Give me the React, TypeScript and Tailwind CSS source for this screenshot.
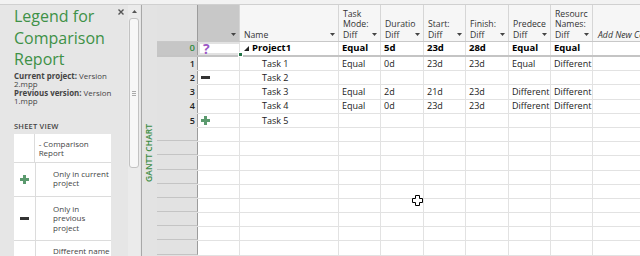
import React from 'react';

// Column definitions for the comparison grid
const COLS = [
    { key: 'ind', w: 'w-[42px]', head: [] as string[] },
    { key: 'name', w: 'w-[99px]', head: ['Name'] },
    { key: 'mode', w: 'w-[42px]', head: ['Task', 'Mode:', 'Diff'] },
    { key: 'dur', w: 'w-[43px]', head: ['Duratio', 'Diff'] },
    { key: 'start', w: 'w-[42px]', head: ['Start:', 'Diff'] },
    { key: 'finish', w: 'w-[43px]', head: ['Finish:', 'Diff'] },
    { key: 'pred', w: 'w-[42px]', head: ['Predece', 'Diff'] },
    { key: 'res', w: 'w-[42px]', head: ['Resourc', 'Names:', 'Diff'] },
];

type Row = { id: number; ind?: 'q' | 'minus' | 'plus'; name?: string; vals?: string[] };

const ROWS: Row[] = [
    { id: 0, ind: 'q', name: 'Project1', vals: ['Equal', '5d', '23d', '28d', 'Equal', 'Equal'] },
    { id: 1, name: 'Task 1', vals: ['Equal', '0d', '23d', '23d', 'Equal', 'Different'] },
    { id: 2, ind: 'minus', name: 'Task 2' },
    { id: 3, name: 'Task 3', vals: ['Equal', '2d', '21d', '23d', 'Different', 'Different'] },
    { id: 4, name: 'Task 4', vals: ['Equal', '0d', '23d', '23d', 'Different', 'Different'] },
    { id: 5, ind: 'plus', name: 'Task 5' },
];

const EMPTY_ROWS = Array.from({ length: 10 }, (_, i) => i);

function Arrow() {
    return (
        <svg width="5" height="3" viewBox="0 0 5 3" className="absolute right-[3px] bottom-[5px]">
            <path d="M0 0h5L2.5 3z" fill="#444" />
        </svg>
    );
}

function PlusIcon() {
    return (
        <svg width="9" height="9" viewBox="0 0 9 9">
            <path d="M3 0h3v3h3v3H6v3H3V6H0V3h3z" fill="#5b9a6e" />
        </svg>
    );
}

function MinusIcon() {
    return <div className="w-[9px] h-[3px] bg-[#333]" />;
}

function Indicator({ kind }: { kind?: Row['ind'] }) {
    if (kind === 'q') return <span className="text-[14px] leading-none font-bold text-[#9b59c6] pl-[3px]">?</span>;
    if (kind === 'minus') return <div className="pl-[3px]"><MinusIcon /></div>;
    if (kind === 'plus') return <div className="pl-[3px]"><PlusIcon /></div>;
    return null;
}

export default function App() {
    return (
        <div className="w-[640px] h-[256px] overflow-hidden flex flex-col bg-white font-['Open_Sans',sans-serif] text-[#222] relative">
            <div className="h-[5px] shrink-0 bg-[#f2f2f2] border-b border-[#d0d0d0]" />
            <div className="flex flex-1 min-h-0">
                {/* Legend panel */}
                <div className="w-[142px] shrink-0 bg-[#e6e6e6] border-r border-[#a8a8a8] flex">
                    <div className="w-[128px] pl-[14px] flex flex-col">
                        <div className="flex justify-between pt-[1px]">
                            <h1 className="text-[16px] leading-[21.5px] text-[#3e9147] w-[100px]">Legend for Comparison Report</h1>
                            <svg width="6" height="6" viewBox="0 0 6 6" className="mt-[3px] mr-[4px] shrink-0">
                                <path d="M0.5 0.5l5 5M5.5 0.5l-5 5" stroke="#555" strokeWidth="1.4" />
                            </svg>
                        </div>
                        <div className="mt-[1px] text-[7.9px] leading-[8.6px] text-[#444] whitespace-nowrap">
                            <p><span className="font-bold">Current project:</span> Version</p>
                            <p>2.mpp</p>
                            <p><span className="font-bold">Previous version:</span> Version</p>
                            <p>1.mpp</p>
                        </div>
                        <p className="mt-[15px] text-[7.5px] leading-[10px] font-semibold text-[#444] tracking-[0.2px]">SHEET VIEW</p>
                        <div className="mt-[3px] w-[97px] bg-white text-[8px] leading-[9.5px] text-[#444]">
                            <div className="flex h-[29px] border-b border-[#dcdcdc]">
                                <div className="w-[22px] border-r border-[#dcdcdc]" />
                                <div className="pl-[4px] pt-[5px]">- Comparison Report</div>
                            </div>
                            <div className="flex h-[34px] border-b border-[#dcdcdc]">
                                <div className="w-[22px] border-r border-[#dcdcdc] flex items-center justify-center"><PlusIcon /></div>
                                <div className="pl-[17px] pt-[6px] w-[75px]">Only in current project</div>
                            </div>
                            <div className="flex h-[44px] border-b border-[#dcdcdc]">
                                <div className="w-[22px] border-r border-[#dcdcdc] flex items-center justify-center"><MinusIcon /></div>
                                <div className="pl-[17px] pt-[7px] w-[60px]">Only in previous project</div>
                            </div>
                            <div className="flex h-[20px]">
                                <div className="w-[22px] border-r border-[#dcdcdc]" />
                                <div className="pl-[17px] pt-[5px] whitespace-nowrap">Different name</div>
                            </div>
                        </div>
                    </div>
                    {/* scrollbar */}
                    <div className="w-[12px] flex flex-col items-center bg-[#ebebeb]">
                        <svg width="5" height="3" viewBox="0 0 5 3" className="mt-[5px]">
                            <path d="M0 3h5L2.5 0z" fill="#555" />
                        </svg>
                        <div className="mt-[5px] w-[10px] h-[150px] rounded-[3px] bg-[#f7f7f7] border border-[#c2c2c2] flex items-center justify-center">
                            <div className="flex flex-col gap-[1px]">
                                <div className="w-[4px] h-[1px] bg-[#aaa]" />
                                <div className="w-[4px] h-[1px] bg-[#aaa]" />
                                <div className="w-[4px] h-[1px] bg-[#aaa]" />
                            </div>
                        </div>
                    </div>
                </div>

                {/* Gantt chart label strip */}
                <div className="w-[15px] shrink-0 bg-[#e3e3e3] flex flex-col items-center pt-[119px]">
                    <span className="[writing-mode:vertical-rl] rotate-180 text-[8.5px] font-semibold text-[#3a8c43] whitespace-nowrap leading-none">GANTT CHART</span>
                </div>

                {/* Grid */}
                <div className="flex-1 min-w-0 flex flex-col">
                    {/* header */}
                    <div className="flex h-[37px] shrink-0 border-b border-[#c8c8c8] bg-[#f6f6f6] text-[8.7px] leading-[10.5px] text-[#333]">
                        <div className="w-[41px] shrink-0 bg-[#e2e2e2] border-r border-[#9c9c9c]" />
                        {COLS.map(c => (
                            <div key={c.key} className={`${c.w} shrink-0 relative border-r border-[#d6d6d6] flex items-end pl-[4px] pb-[1px] overflow-hidden ${c.key === 'ind' ? 'bg-[#c8c8c8]' : ''}`}>
                                <div className="whitespace-nowrap">
                                    {c.head.map(h => <div key={h}>{h}</div>)}
                                </div>
                                <Arrow />
                            </div>
                        ))}
                        <div className="flex-1 flex items-end pl-[5px] pb-[1px] italic whitespace-nowrap overflow-hidden">Add New Column</div>
                    </div>

                    {/* rows */}
                    {ROWS.map(r => {
                        const bold = r.id === 0;
                        return (
                            <div key={r.id} className={`flex shrink-0 ${bold ? 'h-[15px] border-b-2 border-[#c4c4c4] font-bold text-[9.5px] text-black' : 'h-[14.2px] border-b border-[#e2e2e2] text-[9px]'}`}>
                                <div className={`w-[41px] shrink-0 border-r border-[#9c9c9c] flex items-center justify-end pr-[2px] font-semibold ${bold ? 'bg-[#c6c6c6] text-[#2c8a3a]' : 'bg-[#e2e2e2] text-[#222]'}`}>
                                    {r.id}
                                </div>
                                <div className={`w-[42px] shrink-0 border-r border-[#e2e2e2] flex items-center relative ${bold ? 'border-2 border-[#217346]' : ''}`}>
                                    <Indicator kind={r.ind} />
                                    {bold && <div className="absolute right-[-4px] bottom-[-4px] w-[5px] h-[5px] bg-[#217346] border border-white" />}
                                </div>
                                <div className={`w-[99px] shrink-0 border-r border-[#e2e2e2] flex items-center ${bold ? 'pl-[4px]' : 'pl-[22px]'}`}>
                                    {bold && (
                                        <svg width="5" height="5" viewBox="0 0 5 5" className="mr-[3px]">
                                            <path d="M5 0v5H0z" fill="#222" />
                                        </svg>
                                    )}
                                    {r.name}
                                </div>
                                {COLS.slice(2).map((c, i) => (
                                    <div key={c.key} className={`${c.w} shrink-0 border-r border-[#e2e2e2] flex items-center pl-[3px] whitespace-nowrap overflow-hidden`}>
                                        {r.vals ? r.vals[i] : ''}
                                    </div>
                                ))}
                                <div className="flex-1" />
                            </div>
                        );
                    })}
                    {EMPTY_ROWS.map(i => (
                        <div key={i} className="flex shrink-0 h-[14.2px] border-b border-[#e2e2e2]">
                            <div className="w-[41px] shrink-0 bg-[#e2e2e2] border-r border-[#9c9c9c] border-b border-b-[#c4c4c4]" />
                            {COLS.map(c => (
                                <div key={c.key} className={`${c.w} shrink-0 border-r border-[#e2e2e2]`} />
                            ))}
                            <div className="flex-1" />
                        </div>
                    ))}
                </div>
            </div>

            {/* mouse cursor */}
            <svg width="11" height="11" viewBox="0 0 11 11" className="absolute left-[412px] top-[195px]">
                <path d="M3.5 0.5h4v3h3v4h-3v3h-4v-3h-3v-4h3z" fill="white" stroke="black" strokeWidth="1" />
            </svg>
        </div>
    );
}
